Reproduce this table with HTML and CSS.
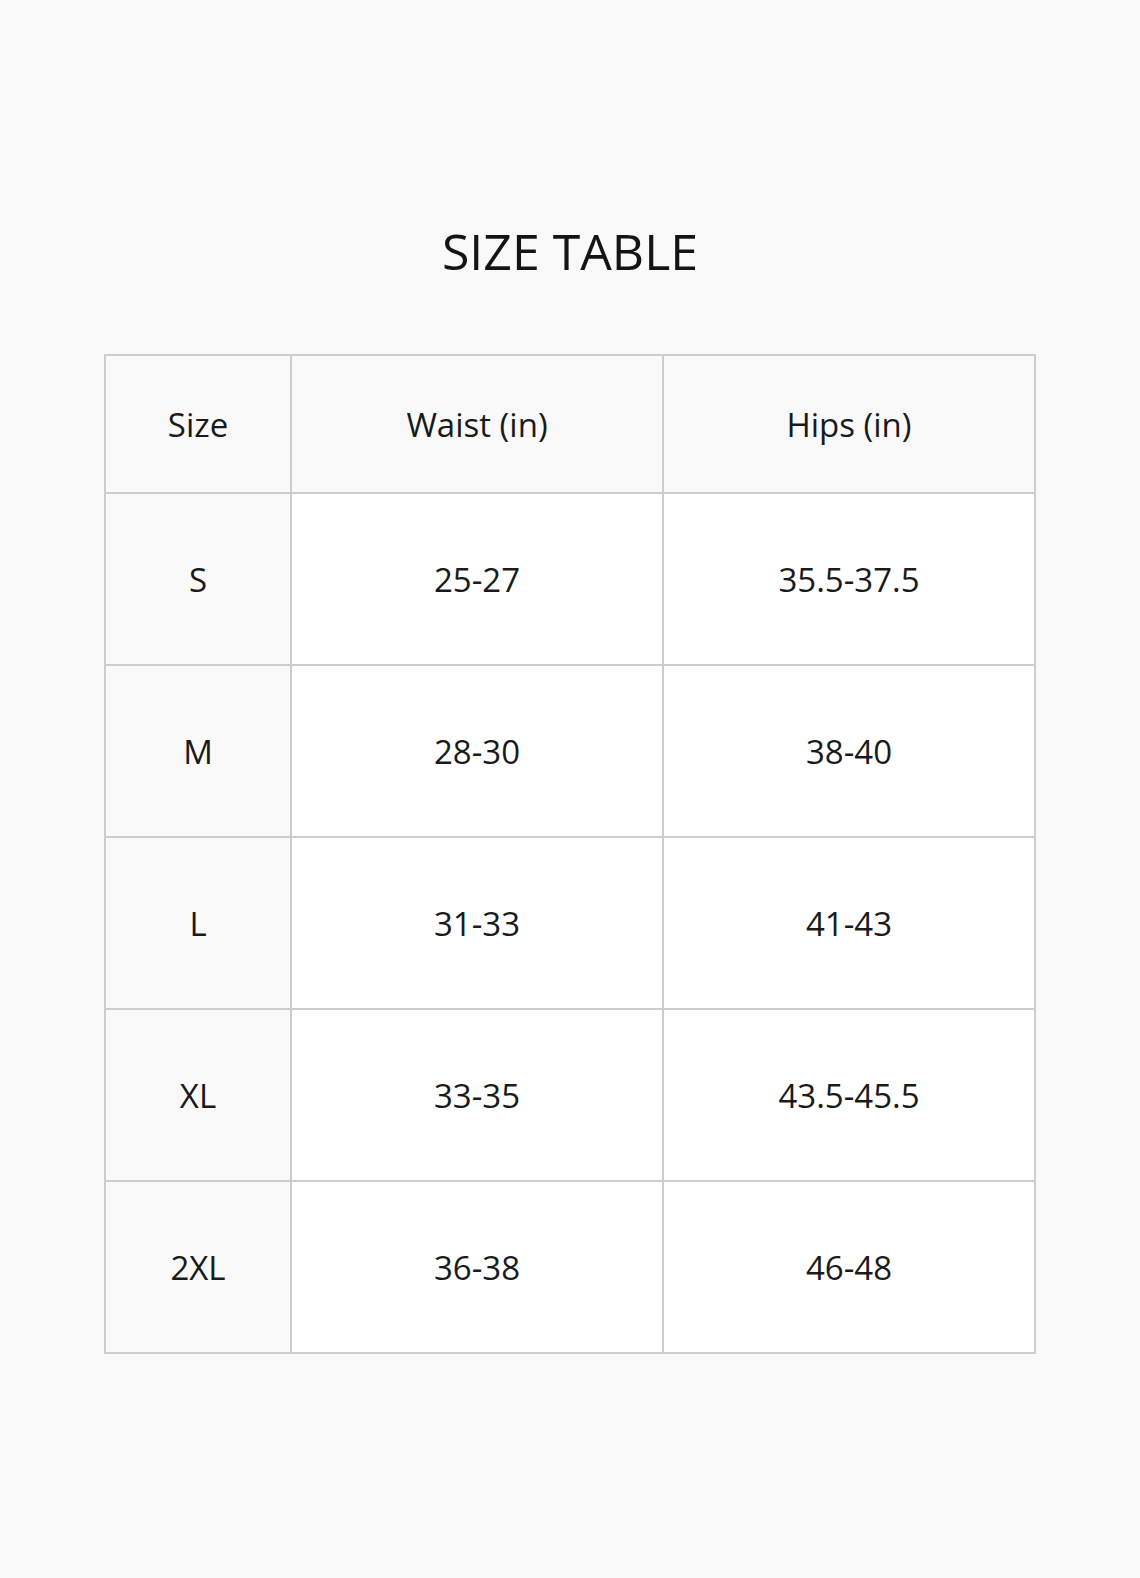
FILE: index.html
```html
<!DOCTYPE html>
<html lang="en">
<head>
<meta charset="utf-8">
<title>Size Table</title>
<link rel="stylesheet" href="styles.css">
</head>
<body>
<main class="page">
  <h1 class="title">SIZE TABLE</h1>
  <table class="size-table">
    <colgroup>
      <col class="col-size">
      <col class="col-val">
      <col class="col-val">
    </colgroup>
    <thead>
      <tr><th class="label">Size</th><th>Waist (in)</th><th>Hips (in)</th></tr>
    </thead>
    <tbody>
      <tr><td class="label">S</td><td>25-27</td><td>35.5-37.5</td></tr>
      <tr><td class="label">M</td><td>28-30</td><td>38-40</td></tr>
      <tr><td class="label">L</td><td>31-33</td><td>41-43</td></tr>
      <tr><td class="label">XL</td><td>33-35</td><td>43.5-45.5</td></tr>
      <tr><td class="label">2XL</td><td>36-38</td><td>46-48</td></tr>
    </tbody>
  </table>
</main>
</body>
</html>
```
FILE: styles.css
```css
html, body {
  margin: 0;
  padding: 0;
  background: #f9f9f9;
}
body {
  font-family: "Open Sans", "Noto Sans", sans-serif;
  color: #1a1a1a;
}
.page {
  display: flex;
  flex-direction: column;
  align-items: center;
  padding-top: 218px;
}
.title {
  margin: 0;
  font-size: 50px;
  font-weight: 400;
  line-height: 66px;
  letter-spacing: 0;
  color: #141414;
}
.size-table {
  margin-top: 70px;
  width: 930px;
  border-collapse: collapse;
  table-layout: fixed;
  border: 2px solid #cccccc;
}
.col-size { width: 186px; }
.col-val { width: 372px; }
.size-table th,
.size-table td {
  border: 2px solid #cccccc;
  text-align: center;
  vertical-align: middle;
  font-size: 33px;
  font-weight: 400;
  padding: 0;
  background: #ffffff;
}
.size-table th {
  height: 136px;
  background: #f9f9f9;
}
.size-table td {
  height: 170px;
}
.size-table .label {
  background: #f9f9f9;
}
```
